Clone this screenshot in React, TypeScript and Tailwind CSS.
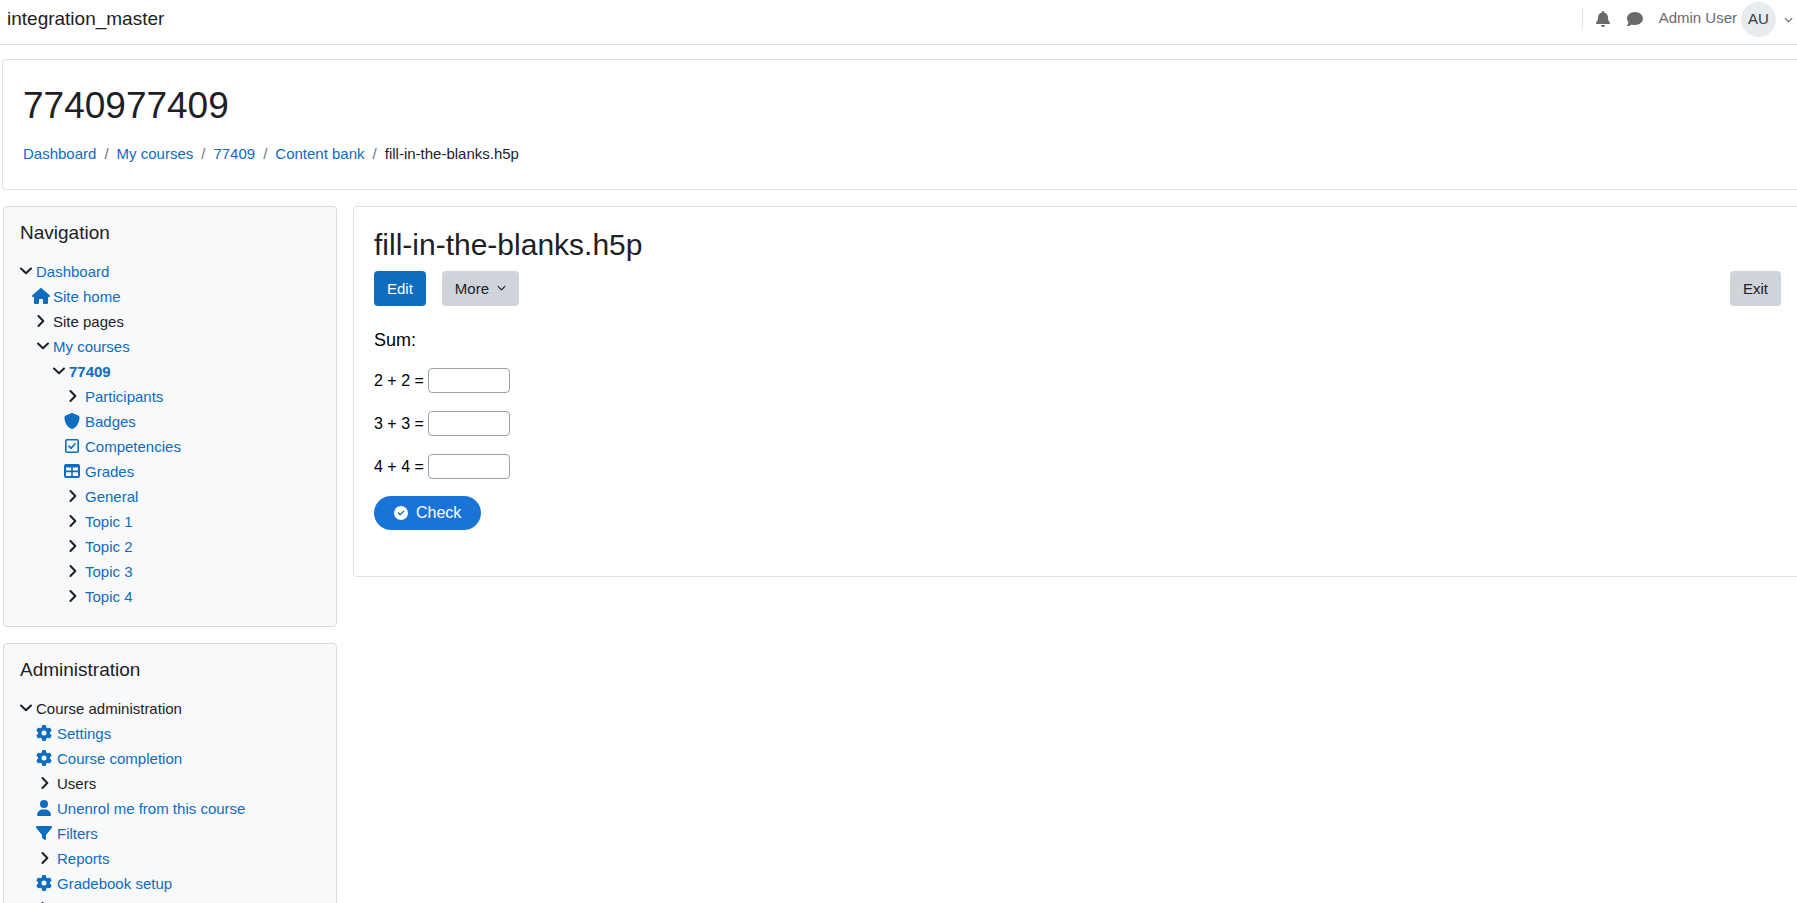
import type { ComponentType } from "react";
import {
  FaBell,
  FaChevronDown,
  FaCircleCheck,
  FaComment,
  FaFilter,
  FaGear,
  FaHouse,
  FaUser,
} from "react-icons/fa6";

type IconProps = { className?: string };

type Item = {
  label: string;
  indent: string;
  icon: ComponentType<IconProps>;
  iconClass: string;
  plain?: boolean;
  bold?: boolean;
};

function Shield({ className }: IconProps) {
  return (
    <svg viewBox="0 0 512 512" fill="currentColor" className={className} aria-hidden="true">
      <path d="M256 0c4.600 0 9.200 1 13.400 2.900L457.700 82.800c22 9.300 38.400 31 38.300 57.200-.5 99.200-41.300 280.700-213.600 363.200-16.700 8-36.100 8-52.800 0C57.300 420.700 16.500 239.200 16 140c-.1-26.200 16.300-47.900 38.300-57.200L242.700 2.900C246.800 1 251.400 0 256 0z" />
    </svg>
  );
}

function Check({ className }: IconProps) {
  return (
    <svg viewBox="0 0 16 16" fill="none" stroke="currentColor" className={className} aria-hidden="true">
      <rect x="1.800" y="1.800" width="12.400" height="12.400" rx="1.300" strokeWidth="1.600" />
      <path d="M5 8.200l2.100 2.100L11 6" strokeWidth="1.700" strokeLinecap="round" strokeLinejoin="round" />
    </svg>
  );
}

function Table({ className }: IconProps) {
  return (
    <svg viewBox="0 0 16 16" fill="currentColor" fillRule="evenodd" className={className} aria-hidden="true">
      <path d="M2 1h12a2 2 0 0 1 2 2v10a2 2 0 0 1-2 2H2a2 2 0 0 1-2-2V3a2 2 0 0 1 2-2zM2 4.500v3h5.200v-3zM8.800 4.500v3H14v-3zM2 9.200V13h5.200V9.200zM8.800 9.200V13H14V9.200z" />
    </svg>
  );
}

function ChevronDown({ className }: IconProps) {
  return (
    <svg viewBox="0 0 12 12" fill="none" stroke="currentColor" strokeWidth="2" strokeLinecap="round" strokeLinejoin="round" className={className} aria-hidden="true">
      <path d="M1 3.500l5 4.800 5-4.800" />
    </svg>
  );
}

function ChevronRight({ className }: IconProps) {
  return (
    <svg viewBox="0 0 12 12" fill="none" stroke="currentColor" strokeWidth="2" strokeLinecap="round" strokeLinejoin="round" className={className} aria-hidden="true">
      <path d="M3.500 1l4.800 5-4.800 5" />
    </svg>
  );
}

const chevron = "size-3 shrink-0 text-[#1d2125]";
const blue = "size-4 shrink-0 text-[#0f6cbf]";

const navigation: Item[] = [
  { label: "Dashboard", indent: "w-4", icon: ChevronDown, iconClass: chevron },
  { label: "Site home", indent: "pl-3 w-[33px]", icon: FaHouse, iconClass: "size-[18px] shrink-0 text-[#0f6cbf]" },
  { label: "Site pages", indent: "pl-[15px] w-[33px]", icon: ChevronRight, iconClass: chevron, plain: true },
  { label: "My courses", indent: "pl-[17px] w-[33px]", icon: ChevronDown, iconClass: chevron },
  { label: "77409", indent: "pl-[33px] w-[49px]", icon: ChevronDown, iconClass: chevron, bold: true },
  { label: "Participants", indent: "pl-[47px] w-[65px]", icon: ChevronRight, iconClass: chevron },
  { label: "Badges", indent: "pl-11 w-[65px]", icon: Shield, iconClass: blue },
  { label: "Competencies", indent: "pl-11 w-[65px]", icon: Check, iconClass: blue },
  { label: "Grades", indent: "pl-11 w-[65px]", icon: Table, iconClass: blue },
  { label: "General", indent: "pl-[47px] w-[65px]", icon: ChevronRight, iconClass: chevron },
  { label: "Topic 1", indent: "pl-[47px] w-[65px]", icon: ChevronRight, iconClass: chevron },
  { label: "Topic 2", indent: "pl-[47px] w-[65px]", icon: ChevronRight, iconClass: chevron },
  { label: "Topic 3", indent: "pl-[47px] w-[65px]", icon: ChevronRight, iconClass: chevron },
  { label: "Topic 4", indent: "pl-[47px] w-[65px]", icon: ChevronRight, iconClass: chevron },
];

const administration: Item[] = [
  { label: "Course administration", indent: "w-4", icon: ChevronDown, iconClass: chevron, plain: true },
  { label: "Settings", indent: "pl-4 w-[37px]", icon: FaGear, iconClass: blue },
  { label: "Course completion", indent: "pl-4 w-[37px]", icon: FaGear, iconClass: blue },
  { label: "Users", indent: "pl-[19px] w-[37px]", icon: ChevronRight, iconClass: chevron, plain: true },
  { label: "Unenrol me from this course", indent: "pl-4 w-[37px]", icon: FaUser, iconClass: blue },
  { label: "Filters", indent: "pl-4 w-[37px]", icon: FaFilter, iconClass: blue },
  { label: "Reports", indent: "pl-[19px] w-[37px]", icon: ChevronRight, iconClass: chevron },
  { label: "Gradebook setup", indent: "pl-4 w-[37px]", icon: FaGear, iconClass: blue },
  { label: "", indent: "pl-[19px] w-[37px]", icon: ChevronRight, iconClass: chevron, plain: true },
];

function Block({ title, items }: { title: string; items: Item[] }) {
  return (
    <section className="rounded border border-[#d8dadc] bg-[#f8f9fa] px-4 pt-4 pb-[17px]">
      <h2 className="text-[19px] leading-5">{title}</h2>
      <ul className="mt-4">
        {items.map(({ label, indent, icon: Icon, iconClass, plain, bold }) => (
          <li key={label} className="flex h-[25px] items-center">
            <span className={`flex h-5 shrink-0 items-center pb-0.5 ${indent}`}>
              <Icon className={iconClass} />
            </span>
            {plain ? (
              <span>{label}</span>
            ) : (
              <a href="#" className={bold ? "font-bold text-[#0f6cbf]" : "text-[#0f6cbf]"}>
                {label}
              </a>
            )}
          </li>
        ))}
      </ul>
    </section>
  );
}

const crumbs = ["Dashboard", "My courses", "77409", "Content bank"];
const sums = ["2 + 2 =", "3 + 3 =", "4 + 4 ="];

export default function App() {
  return (
    <div className="h-screen overflow-hidden bg-white font-['Liberation_Sans',Arial,sans-serif] text-[15px] leading-[22px] text-[#1d2125]">
      <header className="flex h-[45px] items-center justify-between border-b border-[#dee2e6] pr-1 pb-1.5 pl-[7px]">
        <a href="#" className="text-[19px]">
          integration_master
        </a>
        <div className="flex items-center text-[#6a6a6a]">
          <div className="flex h-5 items-center gap-4 border-l border-[#dee2e6] pl-3">
            <button aria-label="Notifications">
              <FaBell className="size-4" />
            </button>
            <button aria-label="Messages">
              <FaComment className="size-4" />
            </button>
          </div>
          <button className="ml-4 flex items-center">
            <span className="pb-0.5">Admin User</span>
            <span className="ml-1 flex size-[35px] items-center justify-center rounded-full bg-[#e9ecef] text-[#343a40]">
              AU
            </span>
            <FaChevronDown className="ml-2 size-[9px]" />
          </button>
        </div>
      </header>

      <section className="mt-3.5 ml-0.5 rounded-l border border-r-0 border-[#dfe1e3] px-5 pt-6 pb-6">
        <h1 className="text-[37px] leading-[43px]">7740977409</h1>
        <nav aria-label="Breadcrumb" className="mt-4">
          <ol className="flex">
            {crumbs.map((crumb) => (
              <li key={crumb}>
                <a href="#" className="text-[#0f6cbf]">
                  {crumb}
                </a>
                <span className="px-2 text-[#6a737b]">/</span>
              </li>
            ))}
            <li>fill-in-the-blanks.h5p</li>
          </ol>
        </nav>
      </section>

      <div className="mt-4 flex items-start gap-4 pl-[3px]">
        <aside className="flex w-[334px] shrink-0 flex-col gap-4">
          <Block title="Navigation" items={navigation} />
          <Block title="Administration" items={administration} />
        </aside>

        <main className="min-w-0 grow rounded-l border border-r-0 border-[#dee2e6] pt-5 pr-4 pb-[46px] pl-5">
          <h2 className="text-[30px] leading-9">fill-in-the-blanks.h5p</h2>
          <div className="mt-2 flex justify-between">
            <div className="flex gap-4">
              <button className="h-[35px] rounded bg-[#0f6cbf] px-[13px] text-white">Edit</button>
              <button className="flex h-[35px] items-center gap-2 rounded bg-[#ced4da] px-[13px]">
                More
                <FaChevronDown className="mb-0.5 size-[9px]" />
              </button>
            </div>
            <button className="h-[35px] rounded bg-[#ced4da] px-[13px]">Exit</button>
          </div>

          <form className="mt-[22px] text-base text-black" onSubmit={(e) => e.preventDefault()}>
            <p className="text-lg leading-6">Sum:</p>
            <div className="mt-4 flex flex-col gap-[18px]">
              {sums.map((sum) => (
                <label key={sum} className="flex h-[25px] items-center gap-1">
                  {sum}
                  <input
                    type="text"
                    className="h-[25px] w-[82px] rounded border border-[#a0a0a0] bg-white px-3"
                  />
                </label>
              ))}
            </div>
            <button className="mt-[17px] flex h-[34px] items-center gap-2 rounded-full bg-[#1a73d9] px-5 text-white">
              <FaCircleCheck className="size-3.5" />
              Check
            </button>
          </form>
        </main>
      </div>
    </div>
  );
}
